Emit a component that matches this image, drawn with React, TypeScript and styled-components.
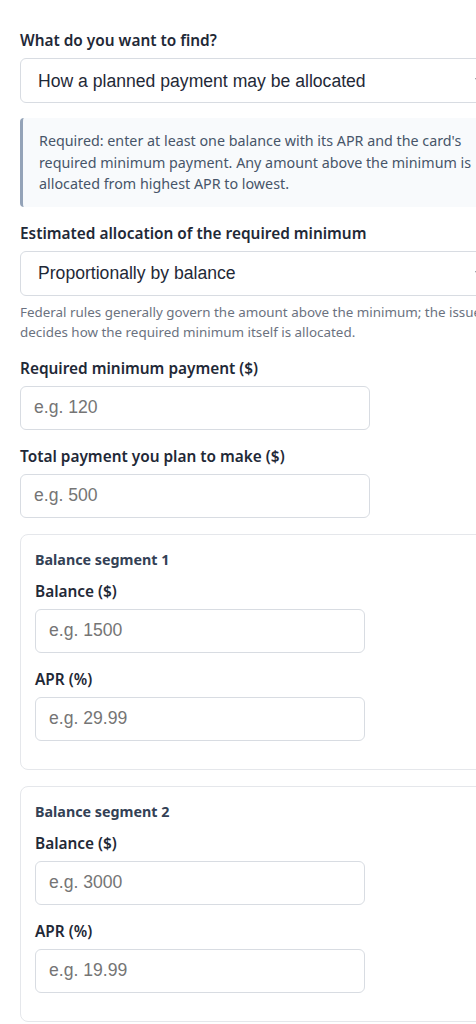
import React from "react";
import styled, { createGlobalStyle } from "styled-components";

const GlobalStyle = createGlobalStyle`
  html, body {
    margin: 0;
    padding: 0;
    background: #ffffff;
    overflow-x: hidden;
  }
  body {
    font-family: "Noto Sans", "Open Sans", sans-serif;
    color: #1f2937;
  }
  * { box-sizing: border-box; }
`;

const Page = styled.main`
  width: 489px;
  padding: 30px 0 24px 20px;
  display: flex;
  flex-direction: column;
`;

const Field = styled.div<{ $flush?: boolean }>`
  display: flex;
  flex-direction: column;
  margin-bottom: ${(p) => (p.$flush ? 0 : 16)}px;
`;

const Label = styled.label`
  font-size: 15.4px;
  font-weight: 600;
  line-height: 22px;
  color: #1f2937;
  margin-bottom: 6px;
`;

const Select = styled.select`
  width: 100%;
  height: 45px;
  padding: 0 18px 0 13px;
  font-family: "Liberation Sans", Arial, sans-serif;
  font-size: 17.6px;
  color: #1f2937;
  background: #ffffff;
  border: 1px solid #d8dce2;
  border-radius: 6px;
`;

const Input = styled.input<{ $width: number }>`
  width: ${(p) => p.$width}px;
  height: 44px;
  padding: 0 13px;
  font-family: "Liberation Sans", Arial, sans-serif;
  font-size: 17.6px;
  color: #1f2937;
  background: #ffffff;
  border: 1px solid #d8dce2;
  border-radius: 6px;
  &::placeholder { color: #757575; }
`;

const Notice = styled.div`
  margin: 15px 0 16px;
  padding: 12px 16px;
  background: #f8fafc;
  border-left: 3px solid #94a3b8;
  border-radius: 4px;
  font-size: 14.3px;
  line-height: 21.5px;
  color: #475569;
`;

const Hint = styled.p`
  margin: 6px 0 0;
  font-size: 13.4px;
  line-height: 20px;
  color: #6b7280;
`;

const Segment = styled.section`
  display: flex;
  flex-direction: column;
  padding: 14px 14px 0;
  margin-bottom: 16px;
  border: 1px solid #e5e7eb;
  border-radius: 8px;
  min-height: 236px;
`;

const SegmentTitle = styled.h3`
  margin: 0 0 10px;
  font-size: 14.3px;
  font-weight: 700;
  line-height: 22px;
  color: #334155;
`;

type SegmentData = { balance: string; apr: string };

const segments: SegmentData[] = [
  { balance: "e.g. 1500", apr: "e.g. 29.99" },
  { balance: "e.g. 3000", apr: "e.g. 19.99" },
];

export default function App() {
  return (
    <>
      <GlobalStyle />
      <Page>
        <Field $flush>
          <Label htmlFor="goal">What do you want to find?</Label>
          <Select id="goal" defaultValue="allocation">
            <option value="allocation">How a planned payment may be allocated</option>
            <option value="payoff">How long it will take to pay off</option>
          </Select>
        </Field>

        <Notice>
          Required: enter at least one balance with its APR and the card's required minimum
          payment. Any amount above the minimum is allocated from highest APR to lowest.
        </Notice>

        <Field>
          <Label htmlFor="minalloc">Estimated allocation of the required minimum</Label>
          <Select id="minalloc" defaultValue="proportional">
            <option value="proportional">Proportionally by balance</option>
            <option value="lowest">To the lowest APR first</option>
          </Select>
          <Hint>
            Federal rules generally govern the amount above the minimum; the issuer decides how
            the required minimum itself is allocated.
          </Hint>
        </Field>

        <Field>
          <Label htmlFor="minpay">Required minimum payment ($)</Label>
          <Input id="minpay" $width={350} placeholder="e.g. 120" />
        </Field>

        <Field>
          <Label htmlFor="total">Total payment you plan to make ($)</Label>
          <Input id="total" $width={350} placeholder="e.g. 500" />
        </Field>

        {segments.map((s, i) => (
          <Segment key={i}>
            <SegmentTitle>Balance segment {i + 1}</SegmentTitle>
            <Field>
              <Label htmlFor={`bal-${i}`}>Balance ($)</Label>
              <Input id={`bal-${i}`} $width={330} placeholder={s.balance} />
            </Field>
            <Field>
              <Label htmlFor={`apr-${i}`}>APR (%)</Label>
              <Input id={`apr-${i}`} $width={330} placeholder={s.apr} />
            </Field>
          </Segment>
        ))}
      </Page>
    </>
  );
}
